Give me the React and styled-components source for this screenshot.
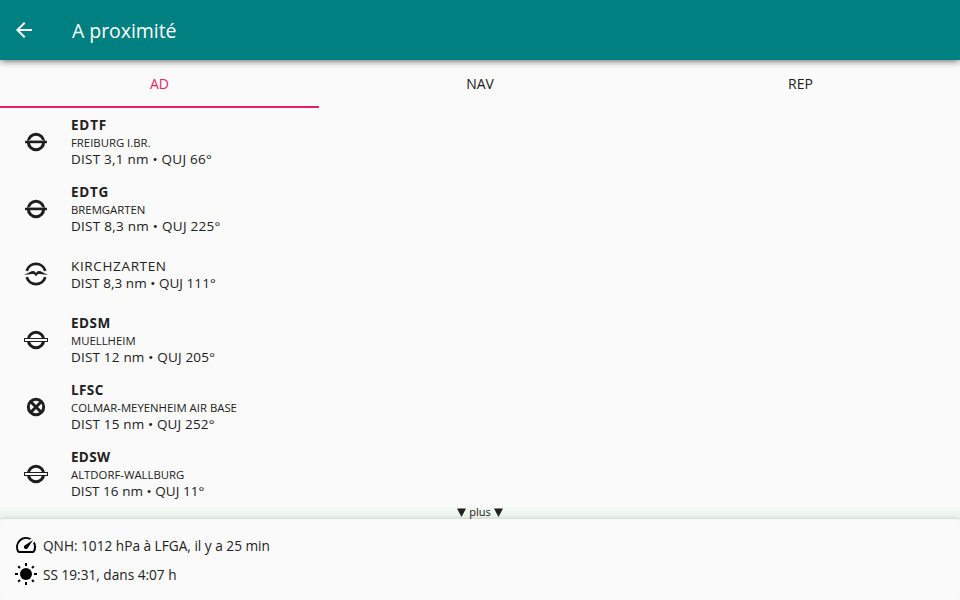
import React from "react";
import styled, { createGlobalStyle } from "styled-components";

const Global = createGlobalStyle`
  * { box-sizing: border-box; }
  html, body { margin: 0; padding: 0; }
  body { background: #fafafa; overflow: hidden; }
`;

const Screen = styled.div`
  display: flex;
  flex-direction: column;
  width: 960px;
  height: 600px;
  background: #fafafa;
  color: #212121;
  font-family: "Open Sans", "Noto Sans", sans-serif;
  overflow: hidden;
`;

const Header = styled.header`
  display: flex;
  align-items: center;
  flex: 0 0 60px;
  padding-left: 12px;
  background: #008080;
  color: #fff;
  box-shadow: 0 1px 7px rgba(0, 0, 0, 0.6);
  z-index: 1;
`;

const BackButton = styled.button`
  display: flex;
  width: 24px;
  height: 24px;
  margin: 0 36px 0 0;
  padding: 0;
  border: 0;
  background: none;
  color: inherit;
`;

const Title = styled.h1`
  margin: 1px 0 0;
  font-size: 19.5px;
  font-weight: 400;
  line-height: 28px;
  letter-spacing: -0.05px;
`;

const Tabs = styled.nav`
  display: grid;
  grid-template-columns: 319px 322px 319px;
  flex: 0 0 48px;
`;

const Tab = styled.button`
  padding: 2px 0 ${(p) => (p.$active ? 0 : 2)}px;
  border: 0;
  border-bottom: ${(p) => (p.$active ? "2px solid #e91e63" : "0")};
  background: none;
  color: ${(p) => (p.$active ? "#e91e63" : "#212121")};
  font: 400 14px/20px "Open Sans", "Noto Sans", sans-serif;
`;

const List = styled.ul`
  flex: 0 0 399px;
  margin: 0;
  padding: 0;
  list-style: none;
`;

const Row = styled.li`
  display: flex;
  align-items: center;
  height: ${(p) => (p.$compact ? 64 : 67)}px;
`;

const IconCell = styled.div`
  display: flex;
  justify-content: center;
  width: 72px;
  margin-right: -1px;
`;

const Info = styled.div`
  display: flex;
  flex-direction: column;
  padding-top: ${(p) => (p.$compact ? 2 : 0)}px;
  white-space: nowrap;
`;

const Code = styled.strong`
  font-size: 13.5px;
  font-weight: 700;
  line-height: 19px;
  letter-spacing: ${(p) => p.$spacing || 0}px;
`;

const Place = styled.span`
  font-size: ${(p) => (p.$large ? 13.5 : 11.35)}px;
  line-height: ${(p) => (p.$large ? 17 : 16)}px;
  letter-spacing: ${(p) => (p.$large ? 0.65 : 0)}px;
`;

const Distance = styled.span`
  font-size: 13.5px;
  line-height: 17px;
  letter-spacing: ${(p) => p.$spacing || 0}px;
`;

const More = styled.div`
  display: flex;
  justify-content: center;
  align-items: center;
  gap: 3px;
  flex: 0 0 12px;
  height: 12px;
  padding-bottom: 2px;
  background: linear-gradient(#f3f9f3, #ecf3ec);
  font-size: 11px;
  line-height: 10px;
`;

const Footer = styled.footer`
  display: flex;
  flex-direction: column;
  flex: 1;
  padding: 12px 15px;
  border-radius: 4px;
  background: #fafafa;
  box-shadow: 0 0 5px rgba(0, 0, 0, 0.2);
`;

const Status = styled.div`
  display: flex;
  align-items: center;
  height: 29px;
  gap: 6px;
  font-size: 13.65px;

  svg {
    margin-top: -2px;
  }
`;

const StatusText = styled.span`
  line-height: 20px;
`;

function Arrow() {
  return (
    <svg width="24" height="24" viewBox="0 0 24 24" fill="currentColor">
      <path d="M20 11H7.8l5.6-5.6L12 4l-8 8 8 8 1.4-1.4L7.8 13H20z" />
    </svg>
  );
}

function FieldIcon({ kind }) {
  return (
    <svg width="24" height="24" viewBox="0 0 24 24" fill="none" stroke="#1e1e1e">
      {kind !== "glider" && (
        <circle cx="12" cy="12" r="7.7" strokeWidth="3" />
      )}
      {kind === "paved" && (
        <>
          <path d="M4.5 10.5h15" stroke="#bdbdbd" strokeWidth="1" />
          <path d="M1 12h22" strokeWidth="2.4" />
        </>
      )}
      {kind === "grass" && (
        <rect x="0.5" y="10.5" width="23" height="3" fill="#fafafa" strokeWidth="1" />
      )}
      {kind === "closed" && <path d="M7 7l10 10M17 7L7 17" strokeWidth="3" />}
      {kind === "glider" && (
        <>
          <path d="M2.7 8.8A9.7 9.7 0 0 1 21.3 8.8M2.7 15.2A9.7 9.7 0 0 0 21.3 15.2" strokeWidth="2.8" />
          <path
            d="M0 13L8 9L10.5 9.2L12 11L13.5 9.2L16 9L24 13L16 11.9L14 12L12 14.3L10 12L8 11.9Z"
            fill="#1e1e1e"
            stroke="none"
          />
        </>
      )}
    </svg>
  );
}

function Gauge() {
  return (
    <svg width="22" height="22" viewBox="1 1 22 22">
      <path d="m20.38 8.57-1.23 1.85a8 8 0 0 1-.22 7.58H5.07A8 8 0 0 1 15.58 6.85l1.85-1.23A10 10 0 0 0 3.35 19a2 2 0 0 0 1.72 1h13.85a2 2 0 0 0 1.74-1 10 10 0 0 0-.27-10.44zm-9.79 6.84a2 2 0 0 0 2.83 0l5.66-8.49-8.49 5.66a2 2 0 0 0 0 2.83z" />
    </svg>
  );
}

function Sun() {
  return (
    <svg width="22" height="22" viewBox="0 0 22 22" stroke="#000" strokeWidth="2">
      <circle cx="11" cy="11" r="6" stroke="none" />
      <path d="M11 0v3M11 19v3M0 11h3M19 11h3M3.2 3.2l1.8 1.8M17 17l1.8 1.8M3.2 18.8L5 17M17 5l1.8-1.8" />
    </svg>
  );
}

function Down() {
  return (
    <svg width="9" height="9" viewBox="0 0 9 9" fill="#212121">
      <path d="M0 .5h9L4.5 9z" />
    </svg>
  );
}

const fields = [
  { icon: "paved", code: "EDTF", codeGap: 0.8, place: "FREIBURG I.BR.", dist: "DIST 3,1 nm • QUJ 66°", distGap: 0.24 },
  { icon: "paved", code: "EDTG", codeGap: 0.75, place: "BREMGARTEN", dist: "DIST 8,3 nm • QUJ 225°", distGap: 0.27 },
  { icon: "glider", place: "KIRCHZARTEN", dist: "DIST 8,3 nm • QUJ 111°", distGap: 0.05 },
  { icon: "grass", code: "EDSM", codeGap: 0.5, place: "MUELLHEIM", dist: "DIST 12 nm • QUJ 205°", distGap: 0.19 },
  { icon: "closed", code: "LFSC", codeGap: 0.4, place: "COLMAR-MEYENHEIM AIR BASE", dist: "DIST 15 nm • QUJ 252°", distGap: 0.17 },
  { icon: "grass", code: "EDSW", codeGap: 0.3, place: "ALTDORF-WALLBURG", dist: "DIST 16 nm • QUJ 11°", distGap: 0.04 },
];

export default function App() {
  return (
    <>
      <Global />
      <Screen>
        <Header>
          <BackButton aria-label="Retour"><Arrow /></BackButton>
          <Title>A proximité</Title>
        </Header>
        <Tabs>
          <Tab $active>AD</Tab>
          <Tab>NAV</Tab>
          <Tab>REP</Tab>
        </Tabs>
        <List>
          {fields.map((f) => (
            <Row key={f.place} $compact={!f.code}>
              <IconCell><FieldIcon kind={f.icon} /></IconCell>
              <Info $compact={!f.code}>
                {f.code && <Code $spacing={f.codeGap}>{f.code}</Code>}
                <Place $large={!f.code}>{f.place}</Place>
                <Distance $spacing={f.distGap}>{f.dist}</Distance>
              </Info>
            </Row>
          ))}
        </List>
        <More><Down />plus<Down /></More>
        <Footer>
          <Status><Gauge /><StatusText>QNH: 1012 hPa à LFGA, il y a 25 min</StatusText></Status>
          <Status><Sun /><StatusText>SS 19:31, dans 4:07 h</StatusText></Status>
        </Footer>
      </Screen>
    </>
  );
}
